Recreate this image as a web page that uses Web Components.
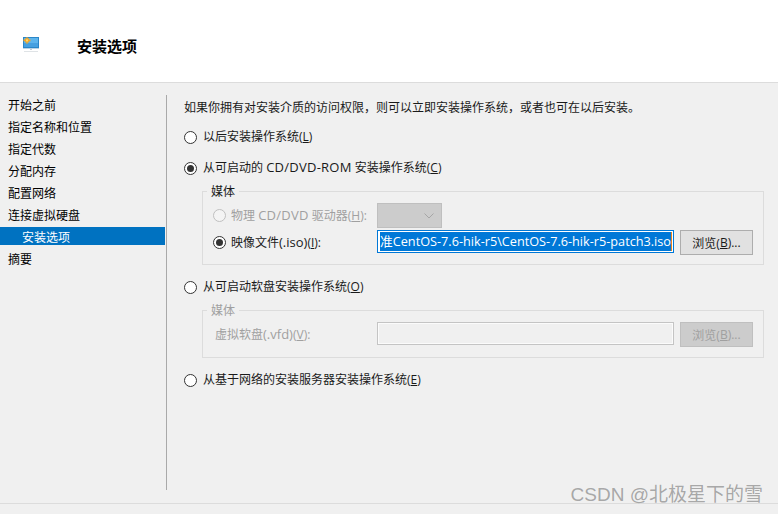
<!DOCTYPE html>
<html lang="zh">
<head>
<meta charset="utf-8">
<title>安装选项</title>
<style>
    html, body {
        margin: 0;
        height: 100%;
        background: #f0f0f0;
        font-family: "Open Sans", "Noto Sans CJK SC", sans-serif;
        font-size: 12px;
        color: #000;
        overflow: hidden;
    }
    /* latin runs sit a bit wider in the original UI font */
    .l { font-size: 13px; line-height: 0; }
    .w { font-size: 13px; line-height: 0; letter-spacing: .25px; }
</style>
</head>
<body>
<wizard-page>
    <wizard-nav slot="nav">
        <nav-item>开始之前</nav-item>
        <nav-item>指定名称和位置</nav-item>
        <nav-item>指定代数</nav-item>
        <nav-item>分配内存</nav-item>
        <nav-item>配置网络</nav-item>
        <nav-item>连接虚拟硬盘</nav-item>
        <nav-item active>安装选项</nav-item>
        <nav-item>摘要</nav-item>
    </wizard-nav>

    <install-options>
        <div id="intro">如果你拥有对安装介质的访问权限，则可以立即安装操作系统，或者也可在以后安装。</div>
        <win-radio style="margin-top:13px">以后安装操作系统(<u>L</u>)</win-radio>
        <win-radio checked style="margin-top:15px">从可启动的 <span class="w">CD/DVD-ROM</span> 安装操作系统(<u>C</u>)</win-radio>
        <media-group style="margin-top:15px;height:74px">
            <win-radio disabled inner>物理 <span class="w">CD/DVD</span> 驱动器(<u>H</u>):</win-radio>
            <win-select disabled></win-select>
            <span></span>
            <win-radio checked inner>映像文件<span class="l">(.iso)</span>(<u>I</u>):</win-radio>
            <win-textbox selected value="标准CentOS-7.6-hik-r5\CentOS-7.6-hik-r5-patch3.iso"></win-textbox>
            <win-button>浏览(<u>B</u>)...</win-button>
        </media-group>
        <win-radio style="margin-top:14px">从可启动软盘安装操作系统(<u>O</u>)</win-radio>
        <media-group disabled style="margin-top:15px;height:48px">
            <field-label disabled>虚拟软盘<span class="l">(.vfd)</span>(<u>V</u>):</field-label>
            <win-textbox disabled></win-textbox>
            <win-button disabled>浏览(<u>B</u>)...</win-button>
        </media-group>
        <win-radio style="margin-top:14px">从基于网络的安装服务器安装操作系统(<u>E</u>)</win-radio>
    </install-options>
</wizard-page>

<script>
    const define = (name, html, extra = {}) => {
        const template = document.createElement("template")
        template.innerHTML = html
        customElements.define(name, class extends HTMLElement {
            constructor() {
                super()
                this.attachShadow({ mode: "open" }).append(template.content.cloneNode(true))
            }
            connectedCallback() {
                if (extra.connected) extra.connected.call(this)
            }
        })
    }

    define("wizard-page", `
        <style>
            :host { display: flex; flex-direction: column; width: 778px; height: 514px; position: relative; }
            header {
                box-sizing: border-box;
                height: 83px;
                background: #fff;
                border-bottom: 1px solid #dcdcdc;
                display: flex;
                align-items: center;
                padding: 9px 0 0 22px;
                gap: 37px;
            }
            svg { display: block; width: 18px; height: 16px; margin-top: -1px; }
            h1 { margin: 0; font: bold 15px "Noto Sans CJK SC", sans-serif; line-height: 20px; }
            main { display: flex; height: 420px; }
            footer { flex: 1; border-top: 1px solid #dcdcdc; }
            .mark {
                position: absolute;
                right: 15px;
                bottom: 6px;
                font: 19px/26px "Liberation Sans", "Noto Sans CJK SC", sans-serif;
                color: rgba(120, 120, 120, .62);
                white-space: nowrap;
            }
        </style>
        <header>
            <svg viewBox="0 0 18 16">
                <rect x="1" y="0" width="16" height="11" fill="#2a86c8"/>
                <rect x="2" y="1" width="14" height="9" fill="#5db4ec"/>
                <rect x="2" y="6" width="14" height="4" fill="#46a0e0"/>
                <rect x="1" y="11" width="16" height="1" fill="#bcd3e3"/>
                <rect x="8" y="12" width="2" height="1" fill="#c4ccd2"/>
                <rect x="2" y="14" width="14" height="1" fill="#dfe3e6"/>
                <path d="M4.500 0h1v1.200h1.300v1.300H8.500v1.800H6.800v1.300H5.500V7h-1V5.600H3.200V4.300H1.500V2.500h1.700V1.200h1.300z" fill="#f6a623"/>
                <rect x="4" y="2.400" width="2" height="2" fill="#ffd76a"/>
            </svg>
            <h1>安装选项</h1>
        </header>
        <main><slot name="nav"></slot><slot></slot></main>
        <footer></footer>
        <div class="mark">CSDN @北极星下的雪</div>
    `)

    define("wizard-nav", `
        <style>
            :host {
                box-sizing: border-box;
                display: flex;
                flex-direction: column;
                gap: 4px;
                width: 167px;
                margin: 12px 0 13px;
                border-right: 1px solid #a9a9a9;
            }
        </style>
        <slot></slot>
    `)

    define("nav-item", `
        <style>
            :host {
                display: block;
                height: 18px;
                line-height: 18px;
                padding-left: 8px;
                margin-right: 1px;
                white-space: nowrap;
                font-family: "Noto Sans CJK SC", sans-serif;
            }
            :host([active]) { background: #0072c1; color: #fff; padding-left: 22px; }
            span { position: relative; top: 1px; }
        </style>
        <span><slot></slot></span>
    `)

    define("install-options", `
        <style>
            :host { display: flex; flex-direction: column; padding: 17px 0 0 17px; width: 594px; box-sizing: border-box; }
            ::slotted(#intro) { height: 16px; line-height: 16px; white-space: nowrap; color: #1a1a1a; }
        </style>
        <slot></slot>
    `)

    define("win-radio", `
        <style>
            :host { display: flex; align-items: center; gap: 6px; height: 16px; line-height: 16px; white-space: nowrap; color: #1a1a1a; }
            :host([inner]) { gap: 5px; height: 25px; }
            :host([disabled]) { color: #a0a0a0; }
            i {
                box-sizing: border-box;
                flex: none;
                width: 13px;
                height: 13px;
                border: 1px solid #333;
                border-radius: 50%;
                background: #fff;
                display: grid;
                place-items: center;
            }
            :host([disabled]) i { border-color: #c0c0c0; background: #f4f4f4; }
            b { display: none; width: 7px; height: 7px; border-radius: 50%; background: #333; }
            :host([checked]) b { display: block; }
        </style>
        <i><b></b></i><span><slot></slot></span>
    `)

    define("media-group", `
        <style>
            :host {
                box-sizing: border-box;
                display: grid;
                grid-template-columns: 158px 297px 73px;
                column-gap: 6px;
                row-gap: 2px;
                align-content: start;
                align-items: start;
                width: 562px;
                margin-left: 18px;
                padding: 11px 0 0 10px;
                border: 1px solid #dcdcdc;
                position: relative;
            }
            .legend {
                position: absolute;
                left: 4px;
                top: -8px;
                padding: 0 4px;
                background: #f0f0f0;
                line-height: 16px;
                color: #1a1a1a;
            }
            :host([disabled]) .legend { color: #a0a0a0; }
        </style>
        <div class="legend">媒体</div>
        <slot></slot>
    `)

    define("field-label", `
        <style>
            :host { display: block; height: 25px; line-height: 25px; padding-left: 2px; white-space: nowrap; color: #a0a0a0; }
        </style>
        <slot></slot>
    `)

    define("win-select", `
        <style>
            :host {
                box-sizing: border-box;
                display: flex;
                align-items: center;
                justify-content: flex-end;
                width: 65px;
                height: 25px;
                padding-right: 7px;
                background: #cccccc;
                border: 1px solid #bfbfbf;
            }
            svg { width: 10px; height: 6px; }
        </style>
        <svg viewBox="0 0 10 6"><path d="M.5.500 5 5 9.500.500" fill="none" stroke="#a6a6a6" stroke-width="1"/></svg>
    `)

    define("win-textbox", `
        <style>
            :host {
                box-sizing: border-box;
                display: block;
                width: 297px;
                height: 23px;
                background: #f0f0f0;
                border: 1px solid #c4c4c4;
                box-shadow: inset 0 0 0 1px #fbfbfb;
            }
            :host([selected]) { background: #fff; border-color: #0078d7; box-shadow: none; padding: 1px 1px 1px 2px; }
            div { display: flex; justify-content: flex-end; overflow: hidden; }
            span {
                flex: none;
                height: 19px;
                line-height: 19px;
                font-size: 12.7px;
                background: #0078d7;
                color: #fff;
                white-space: nowrap;
                border-right: 1px solid #e8821e;
            }
            :host(:not([selected])) span { display: none; }
        </style>
        <div><span></span></div>
    `, {
        connected() {
            this.shadowRoot.querySelector("span").textContent = this.getAttribute("value") || ""
        }
    })

    define("win-button", `
        <style>
            :host {
                box-sizing: border-box;
                display: flex;
                align-items: center;
                justify-content: center;
                width: 73px;
                height: 25px;
                background: #e1e1e1;
                border: 1px solid #adadad;
                white-space: nowrap;
                color: #1a1a1a;
            }
            :host([disabled]) { background: #cccccc; border-color: #bfbfbf; color: #a0a0a0; }
        </style>
        <slot></slot>
    `)
</script>
</body>
</html>
